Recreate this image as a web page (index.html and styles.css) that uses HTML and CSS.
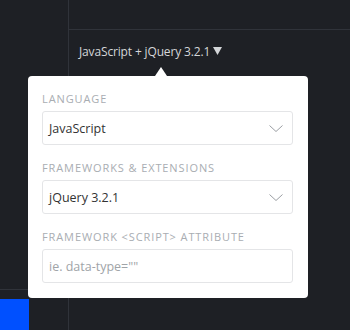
FILE: index.html
```html
<!DOCTYPE html>
<html lang="en">
<head>
    <meta charset="UTF-8">
    <meta name="viewport" content="width=device-width, initial-scale=1.0">
    <title>Editor Settings</title>
    <link rel="stylesheet" href="styles.css">
</head>
<body>
    <div class="app">
        <div class="sidebar">
            <div class="sidebar-footer">
                <div class="run-button"></div>
            </div>
        </div>
        <div class="main">
            <div class="topbar"></div>
            <div class="panel-bar">
                <div class="lang-toggle">
                    <span>JavaScript + jQuery 3.2.1</span>
                    <svg class="toggle-arrow" width="9" height="8" viewBox="0 0 9 8"><path d="M0 0 L9 0 L4.5 8 Z" fill="#d4d6d9"/></svg>
                    <div class="popup">
                        <div class="field">
                            <label class="field-label">Language</label>
                            <div class="select">
                                <span>JavaScript</span>
                                <svg class="chevron" width="14" height="7" viewBox="0 0 14 7"><path d="M0.5 0.5 L7 6.5 L13.5 0.5" fill="none" stroke="#9a9ea3" stroke-width="1"/></svg>
                            </div>
                        </div>
                        <div class="field">
                            <label class="field-label">Frameworks &amp; Extensions</label>
                            <div class="select">
                                <span>jQuery 3.2.1</span>
                                <svg class="chevron" width="14" height="7" viewBox="0 0 14 7"><path d="M0.5 0.5 L7 6.5 L13.5 0.5" fill="none" stroke="#9a9ea3" stroke-width="1"/></svg>
                            </div>
                        </div>
                        <div class="field">
                            <label class="field-label">Framework &lt;script&gt; attribute</label>
                            <input class="text-input" type="text" placeholder='ie. data-type=""'>
                        </div>
                    </div>
                </div>
            </div>
        </div>
    </div>
</body>
</html>
```

FILE: styles.css
```css
* {
    box-sizing: border-box;
}

body {
    margin: 0;
    background-color: #1e2025;
    font-family: "Open Sans", Arial, sans-serif;
    overflow: hidden;
}

.app {
    display: flex;
    height: 330px;
}

.sidebar {
    width: 69px;
    border-right: 1px solid #30333a;
    display: flex;
    flex-direction: column;
}

.sidebar-footer {
    margin-top: auto;
    border-top: 1px solid #30333a;
    height: 41px;
    padding-top: 9px;
}

.run-button {
    width: 29px;
    height: 31px;
    background-color: #0050ff;
}

.main {
    flex: 1;
}

.topbar {
    height: 30px;
    border-bottom: 1px solid #30333a;
}

.panel-bar {
    display: flex;
    padding: 12px 0 0 10px;
}

.lang-toggle {
    position: relative;
    display: flex;
    align-items: center;
    gap: 3px;
    height: 18px;
    color: #d4d6d9;
    font-size: 12px;
    letter-spacing: -0.15px;
}

.toggle-arrow {
    margin-top: -1px;
}

.popup {
    position: absolute;
    top: 34px;
    left: -51px;
    width: 280px;
    background-color: #ffffff;
    border-radius: 4px;
    padding: 16px 15px 15px 14px;
    letter-spacing: normal;
}

.popup::before {
    content: "";
    position: absolute;
    top: -9px;
    left: 127px;
    border-left: 6.5px solid transparent;
    border-right: 6.5px solid transparent;
    border-bottom: 9px solid #ffffff;
}

.field + .field {
    margin-top: 16px;
}

.field-label {
    display: block;
    font-size: 11px;
    line-height: 14px;
    letter-spacing: 0.9px;
    text-transform: uppercase;
    color: #a9adb2;
    margin-bottom: 5px;
}

.select,
.text-input {
    display: flex;
    align-items: center;
    justify-content: space-between;
    width: 100%;
    height: 34px;
    border: 1px solid #e4e5e7;
    border-radius: 3px;
    padding: 0 9px 0 6px;
    font-family: "Open Sans", Arial, sans-serif;
    font-size: 12.5px;
    color: #333333;
}

.text-input {
    outline: none;
}

.text-input::placeholder {
    color: #a0a4a8;
}
```
